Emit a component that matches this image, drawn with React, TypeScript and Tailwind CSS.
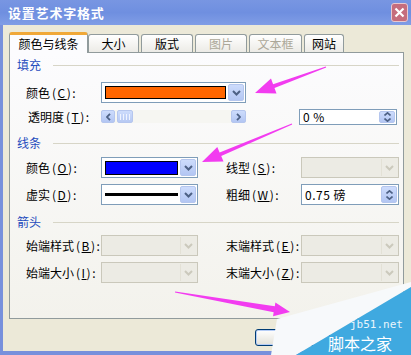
import type { ReactNode } from "react";

// 下拉按钮（XP 风格）
function DropButton({ disabled = false }: { disabled?: boolean }) {
  return (
    <div
      className={
        disabled
          ? "w-[16px] h-full flex items-center justify-center bg-[#ecebe4] border-l border-[#e3e1d6]"
          : "w-[16px] h-full flex items-center justify-center bg-gradient-to-b from-[#cddcfc] to-[#b3c6f3] border border-[#b5c6ee] rounded-[2px]"
      }
    >
      <svg width="9" height="6" viewBox="0 0 9 6">
        <path d="M1 1 L4.5 4.5 L8 1" fill="none" stroke={disabled ? "#cbc9bc" : "#4d6185"} strokeWidth="2" />
      </svg>
    </div>
  );
}

function SpinButton() {
  return (
    <div className="w-[16px] h-full flex flex-col items-center justify-center gap-[2px] bg-gradient-to-b from-[#cddcfc] to-[#b3c6f3] border border-[#b5c6ee] rounded-[2px]">
      <svg width="7" height="4" viewBox="0 0 7 4">
        <path d="M0.5 3.5 L3.5 0.8 L6.5 3.5" fill="none" stroke="#4d6185" strokeWidth="1.6" />
      </svg>
      <svg width="7" height="4" viewBox="0 0 7 4">
        <path d="M0.5 0.5 L3.5 3.2 L6.5 0.5" fill="none" stroke="#4d6185" strokeWidth="1.6" />
      </svg>
    </div>
  );
}

function Combo({ width, children, disabled = false }: { width: string; children?: ReactNode; disabled?: boolean }) {
  return (
    <div
      className={
        (disabled ? "border-[#cac8bb] bg-[#ecebe4] " : "border-[#7f9db9] bg-white ") +
        width +
        " h-[21px] border flex items-stretch p-px"
      }
    >
      <div className="flex-1 flex items-center px-[2px]">{children}</div>
      <DropButton disabled={disabled} />
    </div>
  );
}

function Spin({ text, height }: { text: string; height: string }) {
  return (
    <div className={"w-[98px] border border-[#7f9db9] bg-white flex items-stretch p-px " + height}>
      <div className="flex-1 flex items-center pl-[2px] text-[12px] leading-none text-black tracking-[0.5px]">{text}</div>
      <SpinButton />
    </div>
  );
}

function Label({ name, k, w = "w-[75px]" }: { name: string; k: string; w?: string }) {
  return (
    <div className={w + " text-[12px] leading-none text-black whitespace-nowrap"}>
      {name}
      <span className="ml-[2px] tracking-[1.5px]">
        (<u>{k}</u>):
      </span>
    </div>
  );
}

function Header({ text }: { text: string }) {
  return (
    <div className="h-[14px] flex items-center pl-[7px] pr-[4px]">
      <span className="text-[12px] leading-none text-[#1f4cbd]">{text}</span>
      <div className="flex-1 h-px bg-[#d7d5c7] ml-[12px]" />
    </div>
  );
}

function Slider() {
  return (
    <div className="w-[145px] h-[13px] flex items-stretch bg-[#f6f6f2]">
      <div className="w-[14px] flex items-center justify-center bg-gradient-to-b from-[#cddcfc] to-[#b3c6f3] border border-[#b5c6ee] rounded-[2px]">
        <svg width="5" height="8" viewBox="0 0 5 8">
          <path d="M4 0.8 L1 4 L4 7.2" fill="none" stroke="#4d6185" strokeWidth="1.8" />
        </svg>
      </div>
      <div className="w-[16px] ml-[2px] flex items-center justify-center gap-[2px] bg-gradient-to-b from-[#cddcfc] to-[#b7c9f3] border border-[#b5c6ee] rounded-[2px]">
        <div className="w-px h-[6px] bg-[#eef3ff]" />
        <div className="w-px h-[6px] bg-[#eef3ff]" />
        <div className="w-px h-[6px] bg-[#eef3ff]" />
        <div className="w-px h-[6px] bg-[#eef3ff]" />
      </div>
      <div className="flex-1" />
      <div className="w-[15px] flex items-center justify-center bg-gradient-to-b from-[#cddcfc] to-[#b3c6f3] border border-[#b5c6ee] rounded-[2px]">
        <svg width="5" height="8" viewBox="0 0 5 8">
          <path d="M1 0.8 L4 4 L1 7.2" fill="none" stroke="#4d6185" strokeWidth="1.8" />
        </svg>
      </div>
    </div>
  );
}

function arrowPoints(tx: number, ty: number, hx: number, hy: number, tailW: number, shaftW: number, headLen: number, headW: number) {
  const dx = hx - tx;
  const dy = hy - ty;
  const len = Math.hypot(dx, dy);
  const ux = dx / len;
  const uy = dy / len;
  const px = -uy;
  const py = ux;
  const bx = hx - ux * headLen;
  const by = hy - uy * headLen;
  const pts = [
    [tx + (px * tailW) / 2, ty + (py * tailW) / 2],
    [bx + (px * shaftW) / 2, by + (py * shaftW) / 2],
    [bx + (px * headW) / 2, by + (py * headW) / 2],
    [hx, hy],
    [bx - (px * headW) / 2, by - (py * headW) / 2],
    [bx - (px * shaftW) / 2, by - (py * shaftW) / 2],
    [tx - (px * tailW) / 2, ty - (py * tailW) / 2],
  ];
  return pts.map((p) => p[0].toFixed(1) + "," + p[1].toFixed(1)).join(" ");
}

const tabs = [
  { name: "大小", w: "w-[51px]", off: false },
  { name: "版式", w: "w-[52px]", off: false },
  { name: "图片", w: "w-[52px]", off: true },
  { name: "文本框", w: "w-[53px]", off: true },
  { name: "网站", w: "w-[40px]", off: false },
];

export default function App() {
  return (
    <div className="relative w-[411px] h-[355px] overflow-hidden bg-[#ece9d8] flex flex-col font-['Noto_Sans_CJK_SC','Noto_Sans',sans-serif]">
      {/* 标题栏 */}
      <div className="h-[25px] flex items-center justify-between pl-[8px] pr-[3px] bg-gradient-to-b from-[#7896e2] via-[#6f8fe0] to-[#809de6]">
        <span className="text-[13px] font-bold text-white tracking-[0.8px] leading-none">设置艺术字格式</span>
        <div className="w-[17px] h-[19px] rounded-[3px] border border-[#e8c8cf] bg-[#c56d7d] flex items-center justify-center">
          <svg width="11" height="11" viewBox="0 0 11 11">
            <path d="M1.5 1.5 L9.5 9.5 M9.5 1.5 L1.5 9.5" stroke="white" strokeWidth="2.2" />
          </svg>
        </div>
      </div>

      {/* 主体 */}
      <div className="flex-1 border-l-[3px] border-b-[4px] border-[#7790dc] pl-[6px] pt-[7px] flex flex-col">
        {/* 选项卡 */}
        <div className="h-[20px] flex items-end">
          <div className="relative z-10 w-[79px] h-[21px] -mb-px bg-[#fcfcfe] border border-b-0 border-[#919b9c] rounded-t-[3px] border-t-[3px] border-t-[#f0a838] flex items-center justify-center text-[12px] leading-none text-black">
            颜色与线条
          </div>
          {tabs.map((t) => (
            <div
              key={t.name}
              className={
                t.w +
                " h-[18px] mr-[2px] bg-gradient-to-b from-white to-[#ecebe6] border border-b-0 border-[#919b9c] rounded-t-[3px] flex items-center justify-center text-[12px] leading-none " +
                (t.off ? "text-[#aca899]" : "text-black")
              }
            >
              {t.name}
            </div>
          ))}
        </div>

        {/* 面板 */}
        <div className="w-[395px] h-[267px] border border-[#919b9c] bg-gradient-to-b from-[#fcfcfe] to-[#f3f2ec] flex flex-col">
          <div className="mt-[5px]">
            <Header text="填充" />
          </div>
          <div className="mt-[10px] h-[21px] flex items-center pl-[16px]">
            <Label name="颜色" k="C" />
            <Combo width="w-[145px]">
              <div className="w-full h-[13px] bg-[#ff6600] border border-black" />
            </Combo>
          </div>
          <div className="mt-[6px] h-[15px] flex items-center pl-[18px]">
            <Label name="透明度" k="T" w="w-[73px]" />
            <Slider />
            <div className="w-[53px]" />
            <Spin text="0 %" height="h-[16px]" />
          </div>

          <div className="mt-[12px]">
            <Header text="线条" />
          </div>
          <div className="mt-[7px] h-[21px] flex items-center pl-[16px]">
            <Label name="颜色" k="O" />
            <Combo width="w-[97px]">
              <div className="w-full h-[14px] bg-[#0000ff] border border-black" />
            </Combo>
            <div className="w-[28px]" />
            <Label name="线型" k="S" />
            <Combo width="w-[98px]" disabled />
          </div>
          <div className="mt-[6px] h-[21px] flex items-center pl-[16px]">
            <Label name="虚实" k="D" />
            <Combo width="w-[97px]">
              <div className="w-full h-[3px] bg-black" />
            </Combo>
            <div className="w-[28px]" />
            <Label name="粗细" k="W" />
            <Spin text="0.75 磅" height="h-[21px]" />
          </div>

          <div className="mt-[10px]">
            <Header text="箭头" />
          </div>
          <div className="mt-[6px] h-[21px] flex items-center pl-[16px]">
            <Label name="始端样式" k="B" />
            <Combo width="w-[97px]" disabled />
            <div className="w-[28px]" />
            <Label name="末端样式" k="E" />
            <Combo width="w-[98px]" disabled />
          </div>
          <div className="mt-[6px] h-[21px] flex items-center pl-[16px]">
            <Label name="始端大小" k="I" />
            <Combo width="w-[97px]" disabled />
            <div className="w-[28px]" />
            <Label name="末端大小" k="Z" />
            <Combo width="w-[98px]" disabled />
          </div>
        </div>

        {/* 按钮（被水印遮住，只露出左边） */}
        <div className="mt-[10px] h-[17px] flex pl-[246px]">
          <div className="w-[75px] h-full rounded-[3px] border border-[#003c74] bg-gradient-to-b from-white to-[#e3e1d8] shadow-[inset_0_0_0_1px_#b6cdf6]" />
        </div>
      </div>

      {/* 标注箭头与水印 */}
      <svg className="absolute inset-0 pointer-events-none" width="411" height="355" viewBox="0 0 411 355">
        <polygon points={arrowPoints(326, 67, 255, 93, 1, 4, 20, 16)} fill="#f23cf0" />
        <polygon points={arrowPoints(292, 124, 202, 162, 1, 4, 20, 16)} fill="#f23cf0" />
        <polygon points={arrowPoints(175, 292, 290, 312, 1, 6, 16, 14)} fill="#f23cf0" />
        <polygon points="277,319 411,282 411,287 296,355 271,355" fill="#f7f9fb" />
        <polygon points="411,287 411,355 296,355" fill="#3fa9e0" />
      </svg>
      <div className="absolute left-[350px] top-[319px] text-[11px] leading-[11px] text-[#eaf5fc] font-['DejaVu_Sans_Mono',monospace] whitespace-nowrap">
        jb51.net
      </div>
      <div className="absolute left-[328px] top-[335px] text-[16px] leading-[16px] text-white whitespace-nowrap">
        脚本之家
      </div>
    </div>
  );
}
